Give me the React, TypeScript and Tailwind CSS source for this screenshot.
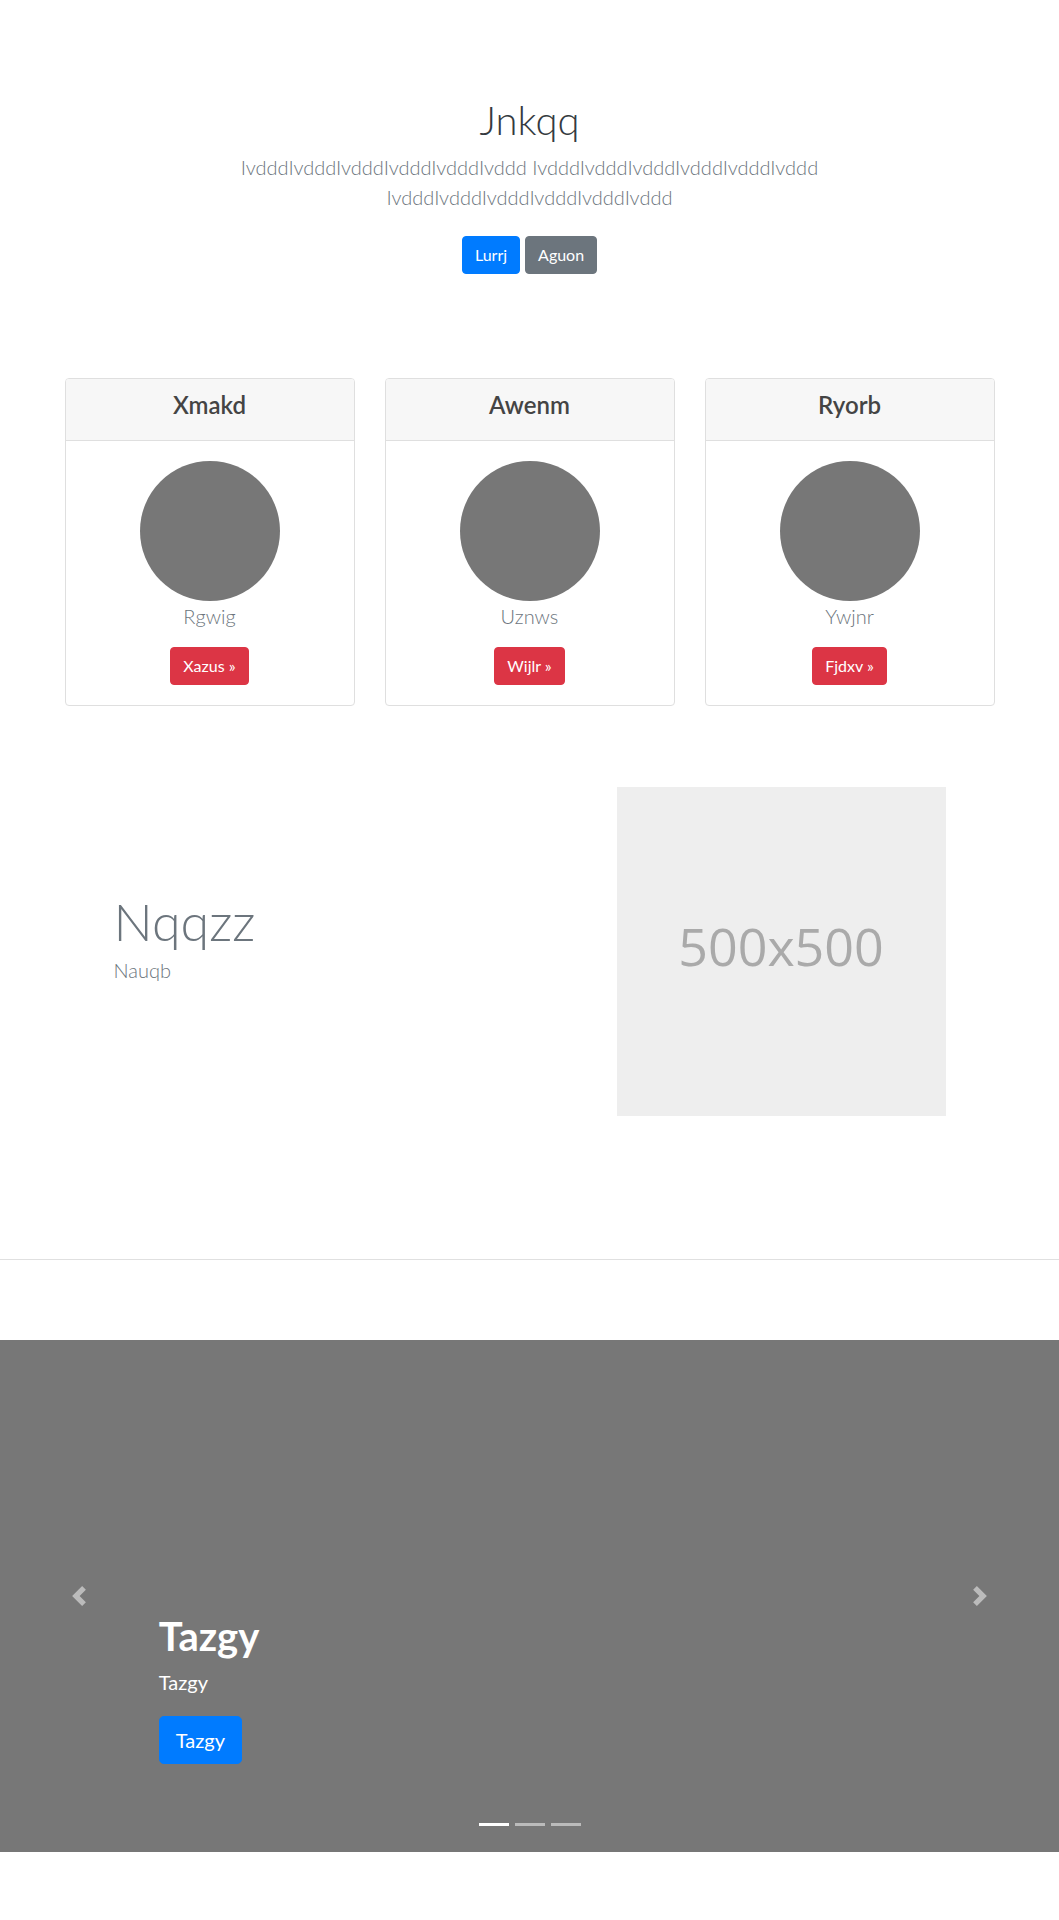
import React from "react";

const word = "IvdddIvdddIvdddIvdddIvdddIvddd";

function Card({ title, name, action }: { title: string; name: string; action: string }) {
  return (
    <div className="flex flex-col rounded-[4px] border border-[#dfdfdf] bg-white">
      <div className="rounded-t-[3px] border-b border-[#dfdfdf] bg-[#f7f7f7] px-5 pt-3 pb-3 text-center">
        <h4 className="mb-2 text-[24px] leading-[28.8px] font-semibold text-[#444]">{title}</h4>
      </div>
      <div className="flex flex-col items-center p-5 text-center">
        <div className="h-[140px] w-[140px] rounded-full bg-[#777]" />
        <p className="mb-4 text-[20px] leading-[30px] font-light text-[#6c757d]">{name}</p>
        <button className="rounded-[4px] border border-[#dc3545] bg-[#dc3545] px-3 py-[6px] text-[16px] leading-[24px] text-white">
          {action} »
        </button>
      </div>
    </div>
  );
}

function Chevron({ dir }: { dir: "prev" | "next" }) {
  return (
    <svg width="20" height="20" viewBox="0 0 8 8" fill="#fff">
      {dir === "prev" ? (
        <path d="M5.25 0l-4 4 4 4 1.5-1.5L4.25 4l2.5-2.5L5.25 0z" />
      ) : (
        <path d="M2.75 0l-1.5 1.5L3.75 4l-2.5 2.5L2.75 8l4-4-4-4z" />
      )}
    </svg>
  );
}

export default function App() {
  return (
    <div className="min-h-[1920px] bg-white font-['Lato',sans-serif] text-[#212529]">
      {/* Hero */}
      <header className="mx-auto max-w-[700px] px-4 pt-[96px] text-center">
        <h1 className="mb-2 text-[40px] leading-[48px] font-light text-[#343a40]">Jnkqq</h1>
        <p className="mb-6 text-[20px] leading-[30px] font-light text-[#6c757d]">
          {word} {word} {word}
        </p>
        <div className="flex justify-center gap-[5px]">
          <button className="rounded-[4px] border border-[#007bff] bg-[#007bff] px-3 py-[6px] text-[16px] leading-[24px] text-white">
            Lurrj
          </button>
          <button className="rounded-[4px] border border-[#6c757d] bg-[#6c757d] px-3 py-[6px] text-[16px] leading-[24px] text-white">
            Aguon
          </button>
        </div>
      </header>

      {/* Cards */}
      <section className="mx-auto mt-[104px] grid w-[960px] grid-cols-3 gap-[30px] px-[15px]">
        <Card title="Xmakd" name="Rgwig" action="Xazus" />
        <Card title="Awenm" name="Uznws" action="Wijlr" />
        <Card title="Ryorb" name="Ywjnr" action="Fjdxv" />
      </section>

      {/* Feature */}
      <section className="mx-auto mt-[81px] flex w-[832px] justify-between">
        <div className="mt-[101px]">
          <h1 className="text-[52px] leading-[67px] font-light text-[#6c757d]">Nqqzz</h1>
          <p className="text-[20px] leading-[30px] font-light text-[#6c757d]">Nauqb</p>
        </div>
        <div className="flex h-[329px] w-[329px] items-center justify-center bg-[#eeeeee] pb-[10px]">
          <span className="font-['Open_Sans',sans-serif] text-[52px] leading-none text-[#aaaaaa]">
            500x500
          </span>
        </div>
      </section>

      <hr className="mt-[143px] border-0 border-t border-[#e0e0e0]" />

      {/* Carousel */}
      <section className="relative mt-[80px] h-[512px] overflow-hidden bg-[#777777]">
        <div className="absolute top-0 bottom-0 left-0 flex w-[15%] items-center justify-center opacity-50">
          <Chevron dir="prev" />
        </div>
        <div className="absolute top-0 right-0 bottom-0 flex w-[15%] items-center justify-center opacity-50">
          <Chevron dir="next" />
        </div>

        <div className="absolute right-[15%] bottom-[48px] left-[15%] py-5 text-left text-white">
          <h1 className="mb-2 text-[40px] leading-[48px] font-bold">Tazgy</h1>
          <p className="mb-5 text-[20px] leading-[28px]">Tazgy</p>
          <p className="mb-5">
            <button className="rounded-[4.8px] border border-[#007bff] bg-[#007bff] px-4 py-2 text-[20px] leading-[30px] text-white">
              Tazgy
            </button>
          </p>
        </div>

        <ol className="absolute right-[15%] bottom-0 left-[15%] mb-4 flex list-none justify-center pl-0">
          <li className="mx-[3px] box-content h-[3px] w-[30px] border-y-[10px] border-transparent bg-white bg-clip-padding" />
          <li className="mx-[3px] box-content h-[3px] w-[30px] border-y-[10px] border-transparent bg-white bg-clip-padding opacity-50" />
          <li className="mx-[3px] box-content h-[3px] w-[30px] border-y-[10px] border-transparent bg-white bg-clip-padding opacity-50" />
        </ol>
      </section>
    </div>
  );
}
